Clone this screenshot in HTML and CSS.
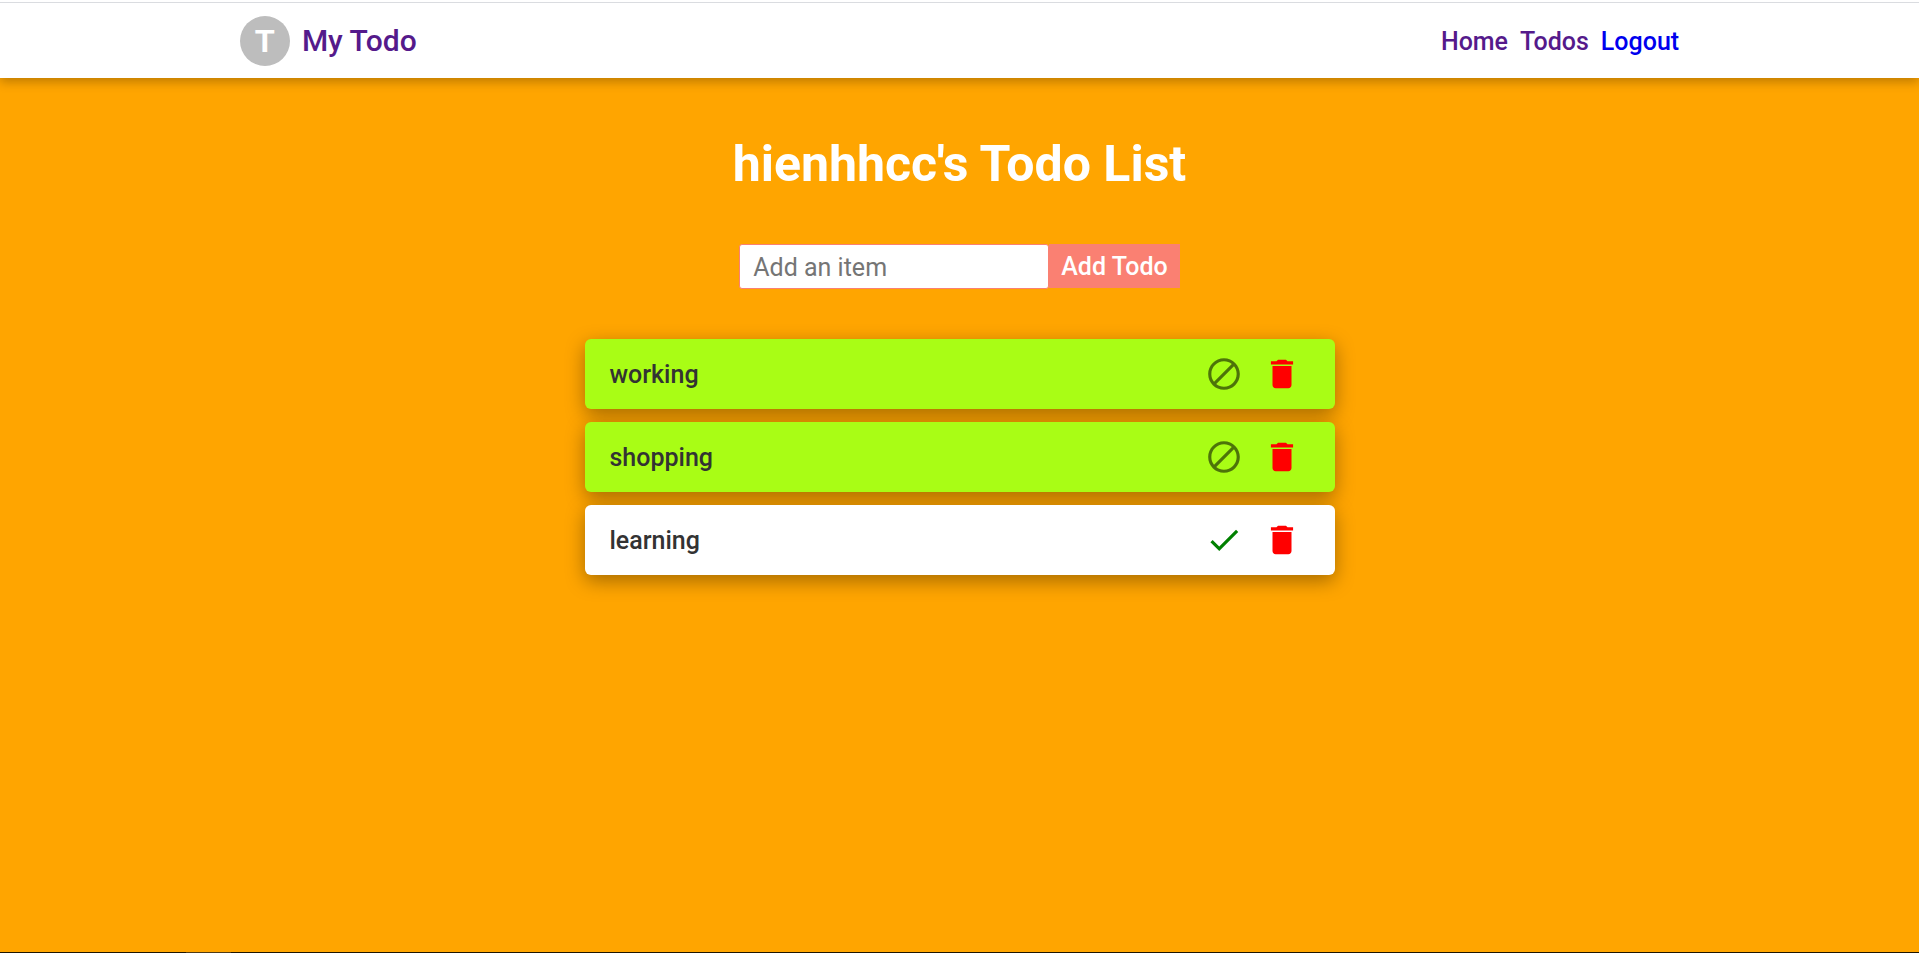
FILE: index.html
```
<!DOCTYPE html>
<html lang="en">
<head>
<meta charset="utf-8">
<title>My Todo</title>
<link rel="stylesheet" href="styles.css">
</head>
<body>
<svg width="0" height="0" class="sprite" aria-hidden="true">
  <symbol id="block" viewBox="0 0 24 24"><path d="M12 2C6.48 2 2 6.48 2 12s4.48 10 10 10 10-4.48 10-10S17.520 2 12 2zM4 12c0-4.420 3.580-8 8-8 1.850 0 3.550.63 4.900 1.690L5.690 16.900C4.630 15.550 4 13.850 4 12zm8 8c-1.850 0-3.550-.63-4.900-1.690L18.310 7.100C19.370 8.450 20 10.150 20 12c0 4.420-3.580 8-8 8z"/></symbol>
  <symbol id="check" viewBox="0 0 24 24"><path d="M9 16.170L4.830 12l-1.420 1.410L9 19 21 7l-1.410-1.410z"/></symbol>
  <symbol id="trash" viewBox="0 0 24 24"><path d="M6 19c0 1.100.9 2 2 2h8c1.100 0 2-.9 2-2V7H6v12zM19 4h-3.500l-1-1h-5l-1 1H5v2h14V4z"/></symbol>
</svg>
<header class="navbar">
  <div class="navbar-inner">
    <a class="brand" href="#home"><span class="avatar">T</span><span class="brand-name">My Todo</span></a>
    <nav class="links">
      <a href="#home">Home</a>
      <a href="#todos">Todos</a>
      <a class="logout" href="#logout">Logout</a>
    </nav>
  </div>
</header>
<main class="page">
  <h1 class="title">hienhhcc's Todo List</h1>
  <form class="add-form">
    <input class="add-input" type="text" placeholder="Add an item" aria-label="Add an item">
    <button class="add-button" type="button">Add Todo</button>
  </form>
  <ul class="todos">
    <li class="todo done">
      <span class="todo-text">working</span>
      <button class="icon-button" type="button" aria-label="Mark working as not done"><svg class="icon"><use href="#block"/></svg></button>
      <button class="icon-button delete" type="button" aria-label="Delete working"><svg class="icon"><use href="#trash"/></svg></button>
    </li>
    <li class="todo done">
      <span class="todo-text">shopping</span>
      <button class="icon-button" type="button" aria-label="Mark shopping as not done"><svg class="icon"><use href="#block"/></svg></button>
      <button class="icon-button delete" type="button" aria-label="Delete shopping"><svg class="icon"><use href="#trash"/></svg></button>
    </li>
    <li class="todo">
      <span class="todo-text">learning</span>
      <button class="icon-button complete" type="button" aria-label="Mark learning as done"><svg class="icon"><use href="#check"/></svg></button>
      <button class="icon-button delete" type="button" aria-label="Delete learning"><svg class="icon"><use href="#trash"/></svg></button>
    </li>
  </ul>
</main>
<footer class="edge"><span class="edge-mark"></span></footer>
</body>
</html>
```
FILE: styles.css
```
* { box-sizing: border-box; }
body {
  margin: 0;
  min-height: 100vh;
  display: flex;
  flex-direction: column;
  background: #ffa500;
  font-family: Roboto, "Liberation Sans", sans-serif;
  font-size: 25px;
}
.sprite { position: absolute; }
.navbar {
  border-top: 2px solid #fff;
  background: #fff;
  box-shadow: 0 4px 10px rgba(0, 0, 0, 0.25);
}
.navbar-inner {
  display: flex;
  justify-content: center;
  border-top: 1px solid #dadce0;
  padding: 13px 0 12px;
}
.brand, .links {
  display: flex;
  align-items: center;
}
.navbar a {
  color: #551a8b;
  font-weight: 500;
  text-decoration: none;
}
.navbar .logout { color: #0000ee; }
.brand {
  width: 37.5%;
  gap: 12px;
  font-size: 30px;
  line-height: 34px;
}
.links {
  width: 37.5%;
  justify-content: flex-end;
  gap: 12px;
}
.avatar {
  display: flex;
  align-items: center;
  justify-content: center;
  width: 50px;
  height: 50px;
  border-radius: 50%;
  background: #bdbdbd;
  color: #fff;
  font-family: "Liberation Sans", sans-serif;
  font-size: 32px;
  font-weight: 700;
}
.page {
  flex: 1;
  display: flex;
  flex-direction: column;
  align-items: center;
  padding: 50px 20px;
}
.title {
  margin: 0;
  color: #fff;
  font-size: 50px;
  font-weight: 700;
  line-height: 72px;
}
.add-form {
  display: flex;
  margin: 44px 0 50px;
}
.add-input {
  width: 310px;
  height: 45px;
  border: 1px solid #fa8072;
  border-radius: 3px;
  padding: 1px 13px 0;
  font: inherit;
}
.add-input::placeholder { color: #757575; }
.add-button {
  height: 44px;
  border: 0;
  padding: 0 12px;
  background: #fa8072;
  color: #fff;
  font: inherit;
  font-weight: 500;
}
.todos {
  display: flex;
  flex-direction: column;
  gap: 13px;
  width: 100%;
  max-width: 750px;
  margin: 0;
  padding: 0;
  list-style: none;
}
.todo {
  display: flex;
  align-items: center;
  height: 70px;
  border-radius: 6px;
  padding: 0 34px 0 25px;
  background: #fff;
  box-shadow: 0 6px 19px rgba(0, 0, 0, 0.35);
}
.todo.done { background: #a9fd15; }
.todo-text {
  flex: 1;
  color: #333;
  font-weight: 500;
}
.icon-button {
  display: flex;
  border: 0;
  padding: 0;
  margin-left: 20px;
  background: none;
  color: rgba(0, 0, 0, 0.54);
}
.icon-button.complete { color: #008000; }
.icon-button.delete { color: #ff0000; }
.icon {
  width: 38px;
  height: 38px;
  fill: currentColor;
}
.edge {
  height: 1px;
  background: #1f1500;
}
.edge-mark {
  display: block;
  width: 45px;
  height: 1px;
  margin-left: 186px;
  background: #4f3a15;
}
```
